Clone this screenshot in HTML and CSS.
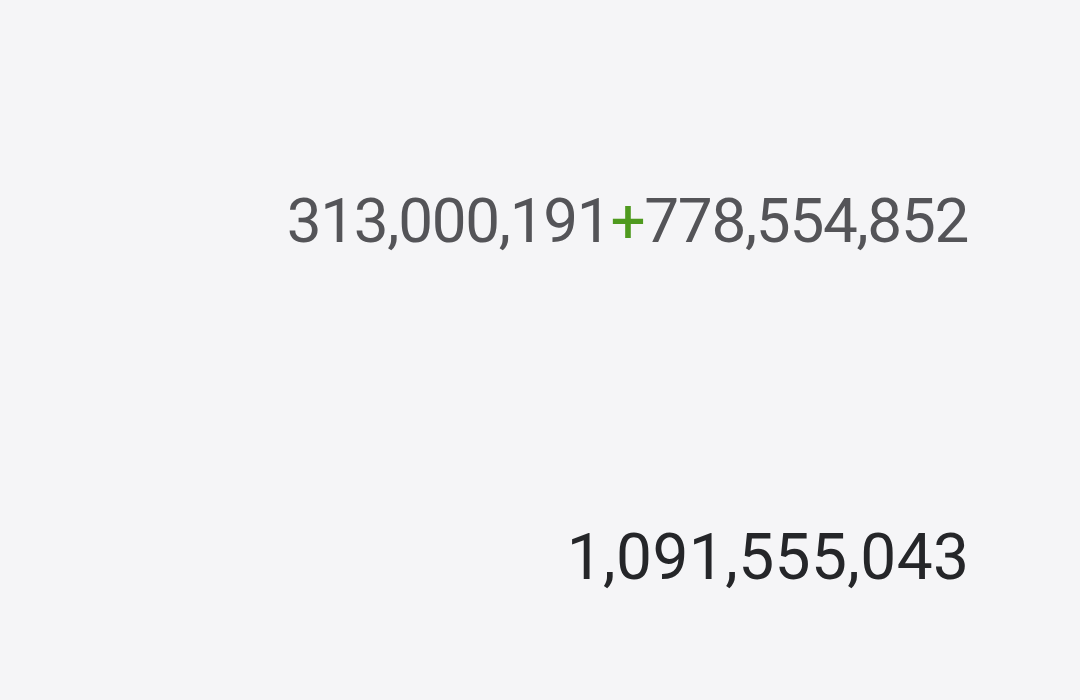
FILE: index.html
```html
<!DOCTYPE html>
<html lang="en">
<head>
<meta charset="utf-8">
<title>Calculator</title>
<link rel="stylesheet" href="styles.css">
</head>
<body>
<main class="display">
  <div class="expression">313,000,191<span class="op">+</span>778,554,852</div>
  <div class="result">1,091,555,043</div>
</main>
</body>
</html>
```
FILE: styles.css
```css
html, body {
  margin: 0;
  padding: 0;
  background: #f5f5f7;
}
body {
  width: 1080px;
  height: 700px;
  overflow: hidden;
  font-family: Roboto, "Noto Sans", sans-serif;
}
.display {
  display: flex;
  flex-direction: column;
  align-items: flex-end;
  padding: 190px 112px 0 0;
}
.expression {
  font-size: 62px;
  line-height: 62px;
  font-weight: 400;
  color: #545458;
  letter-spacing: -1.3px;
  white-space: nowrap;
}
.op {
  color: #4f9a1f;
}
.result {
  margin-top: 274px;
  font-size: 64px;
  line-height: 64px;
  font-weight: 400;
  color: #252629;
  letter-spacing: 0.4px;
  margin-right: -1.4px;
  white-space: nowrap;
}
```
